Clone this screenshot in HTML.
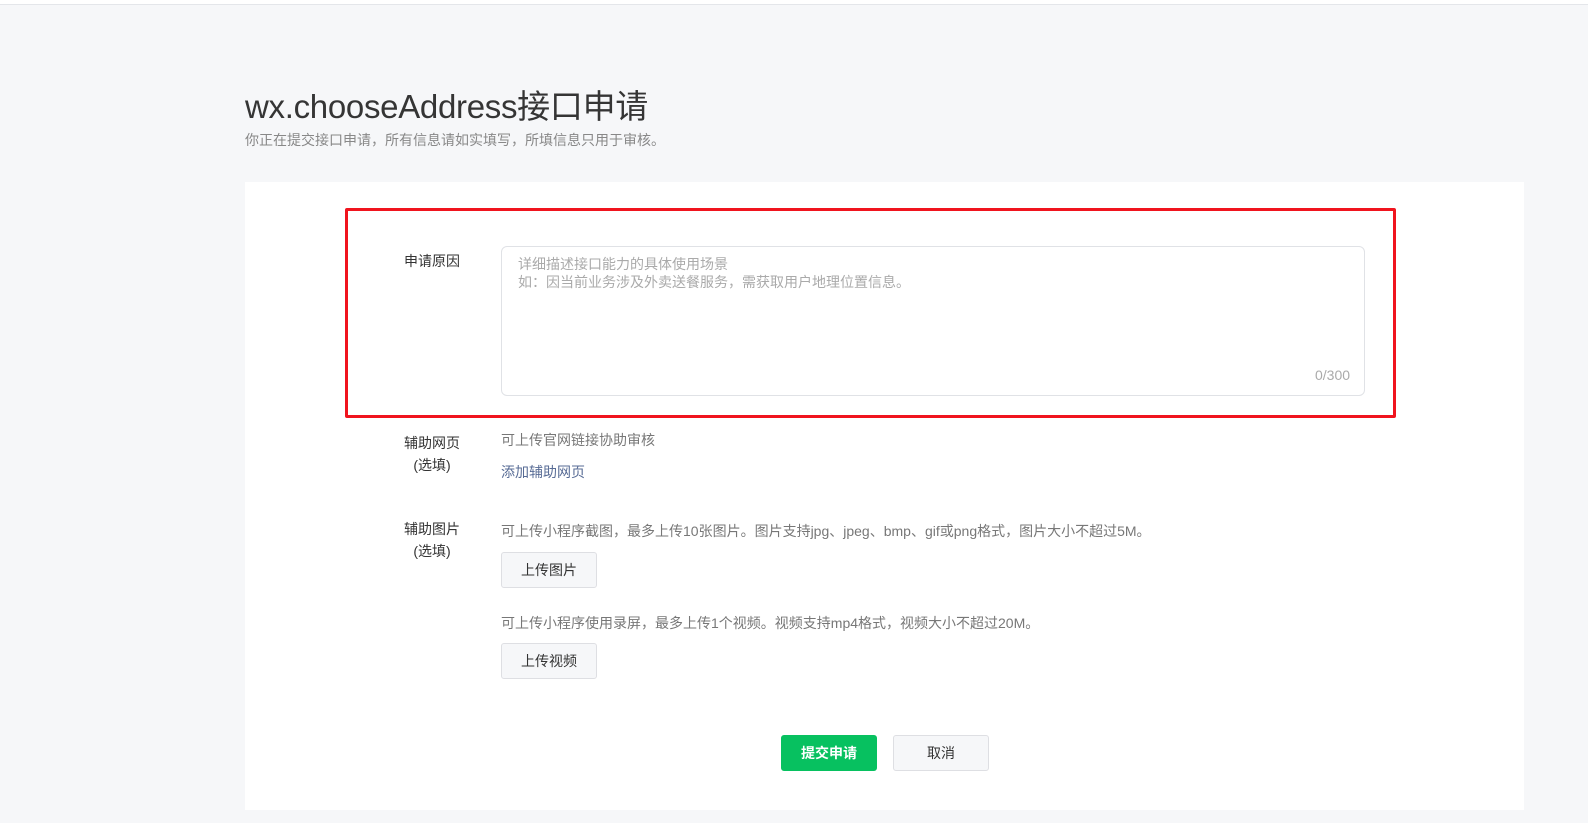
<!DOCTYPE html>
<html><head><meta charset="utf-8"><style>
*{margin:0;padding:0;box-sizing:border-box}
body{width:1588px;height:823px;background:#f6f7f9;font-family:"Liberation Sans","Noto Sans CJK SC",sans-serif;position:relative;overflow:hidden;color:#333}
.top{position:absolute;left:0;top:0;width:1588px;height:5px;background:#fff;border-bottom:1px solid #e4e6ea}
.abs{position:absolute;white-space:nowrap}
h1{position:absolute;left:245px;top:80px;font-size:33px;font-weight:normal;color:#353535;letter-spacing:-0.3px}
.sub{left:245px;top:130px;font-size:14px;color:#888}
.card{position:absolute;left:245px;top:182px;width:1279px;height:628px;background:#fff}
.red{position:absolute;left:345px;top:208px;width:1051px;height:210px;border:3px solid #f0141e;border-radius:2px}
.lbl{font-size:14px;color:#333;text-align:center;width:70px;line-height:22px}
.ta{position:absolute;left:501px;top:246px;width:864px;height:150px;border:1px solid #e0e2e6;border-radius:6px}
.ph{font-size:14px;color:#aaa;line-height:18px}
.txt{font-size:14px;color:#777}
.btn{position:absolute;width:96px;height:36px;border:1px solid #dedfe3;border-radius:3px;background:#f6f7f9;font-size:14px;color:#333;text-align:center;line-height:34px}
</style></head><body>
<div class="top"></div>
<h1>wx.chooseAddress接口申请</h1>
<div class="abs sub">你正在提交接口申请，所有信息请如实填写，所填信息只用于审核。</div>
<div class="card"></div>
<div class="red"></div>
<div class="abs lbl" style="left:397px;top:250px">申请原因</div>
<div class="ta"></div>
<div class="abs ph" style="left:518px;top:255px">详细描述接口能力的具体使用场景<br>如：因当前业务涉及外卖送餐服务，需获取用户地理位置信息。</div>
<div class="abs" style="left:1315px;top:367px;font-size:14px;color:#aaa">0/300</div>
<div class="abs lbl" style="left:397px;top:432px">辅助网页<br>(选填)</div>
<div class="abs txt" style="left:501px;top:430px">可上传官网链接协助审核</div>
<div class="abs" style="left:501px;top:462px;font-size:14px;color:#576b95">添加辅助网页</div>
<div class="abs lbl" style="left:397px;top:518px">辅助图片<br>(选填)</div>
<div class="abs txt" style="left:501px;top:521px">可上传小程序截图，最多上传10张图片。图片支持jpg、jpeg、bmp、gif或png格式，图片大小不超过5M。</div>
<div class="btn" style="left:501px;top:552px">上传图片</div>
<div class="abs txt" style="left:501px;top:613px">可上传小程序使用录屏，最多上传1个视频。视频支持mp4格式，视频大小不超过20M。</div>
<div class="btn" style="left:501px;top:643px">上传视频</div>
<div class="btn" style="left:781px;top:735px;background:#07c160;border-color:#07c160;color:#fff;font-weight:bold">提交申请</div>
<div class="btn" style="left:893px;top:735px">取消</div>
</body></html>
